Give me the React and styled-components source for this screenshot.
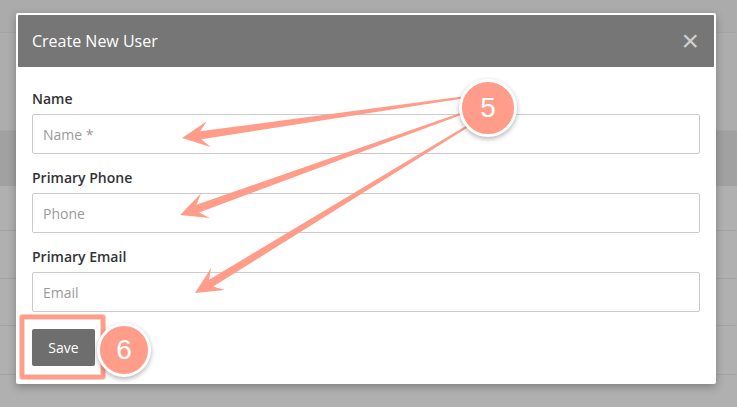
import React from "react";
import styled, { createGlobalStyle } from "styled-components";

const GlobalStyle = createGlobalStyle`
  html, body {
    margin: 0;
    padding: 0;
    width: 737px;
    height: 407px;
    overflow: hidden;
    background: #adadad;
    font-family: "Open Sans", "Noto Sans", sans-serif;
  }
`;

const SALMON = "#ff9d8a";

// ---- backdrop (page behind the dimmed overlay) ----

const Page = styled.div`
  position: relative;
  width: 737px;
  height: 407px;
  overflow: hidden;
  display: flex;
  flex-direction: column;
`;

const TopStrip = styled.div`
  height: 17px;
  background: #b2b2b2;
  display: flex;
  overflow: hidden;
`;

const TopCell = styled.div`
  width: ${(p) => p.width}px;
  height: 17px;
  background: ${(p) => (p.dark ? "#a6a6a6" : "transparent")};
  color: #3f3f3f;
  font-size: 14px;
  line-height: 16px;
  white-space: nowrap;
  overflow: hidden;
  padding-left: ${(p) => p.pad || 0}px;
  box-sizing: border-box;
  span {
    display: block;
    margin-top: -9px;
  }
`;

const Row = styled.div`
  height: ${(p) => p.h}px;
  background: ${(p) => p.bg || "#b0b0b0"};
  border-bottom: 1px solid ${(p) => p.line || "#a2a2a2"};
  box-sizing: border-box;
  flex-shrink: 0;
`;

// ---- modal ----

const Modal = styled.div`
  position: absolute;
  left: 16px;
  top: 13px;
  width: 700px;
  height: 371px;
  background: #fff;
  border-radius: 2px;
  padding: 2px;
  box-sizing: border-box;
  box-shadow: 0 3px 9px rgba(0, 0, 0, 0.28);
  display: flex;
  flex-direction: column;
`;

const Header = styled.div`
  height: 52px;
  background: #767676;
  display: flex;
  align-items: center;
  justify-content: space-between;
  padding: 0 14px;
  border-radius: 1px;
`;

const Title = styled.h4`
  margin: 0;
  font-size: 16px;
  font-weight: 400;
  color: #fff;
`;

const Close = styled.span`
  color: #cfcfcf;
  font-family: "Liberation Sans", Arial, sans-serif;
  font-size: 30px;
  font-weight: 300;
  line-height: 1;
  margin-right: 1px;
`;

const Body = styled.div`
  padding: 22px 14px 0 14px;
  display: flex;
  flex-direction: column;
`;

const Field = styled.div`
  display: flex;
  flex-direction: column;
  gap: 5px;
  margin-bottom: 14px;
  &:last-of-type {
    margin-bottom: 17px;
  }
`;

const Label = styled.label`
  font-size: 14px;
  font-weight: 600;
  line-height: 20px;
  color: #333;
`;

const Input = styled.input`
  height: 40px;
  box-sizing: border-box;
  border: 1px solid #cbcbcb;
  border-radius: 2px;
  padding: 0 10px;
  font-family: "Open Sans", "Noto Sans", sans-serif;
  font-size: 14px;
  color: #555;
  outline: none;
  &::placeholder {
    color: #9a9a9a;
  }
`;

const SaveButton = styled.button`
  align-self: flex-start;
  width: 63px;
  height: 37px;
  border: none;
  border-radius: 2px;
  background: #6e6e6e;
  color: #fff;
  font-family: "Open Sans", "Noto Sans", sans-serif;
  font-size: 14px;
`;

// ---- annotations ----

const Overlay = styled.svg`
  position: absolute;
  left: 0;
  top: 0;
  pointer-events: none;
`;

const Badge = styled.div`
  position: absolute;
  left: ${(p) => p.x - p.r}px;
  top: ${(p) => p.y - p.r}px;
  width: ${(p) => p.r * 2}px;
  height: ${(p) => p.r * 2}px;
  box-sizing: border-box;
  border-radius: 50%;
  border: 3px solid #fff;
  background: ${SALMON};
  box-shadow: 0 2px 5px rgba(0, 0, 0, 0.3);
  color: #fff;
  font-family: "Liberation Sans", Arial, sans-serif;
  font-size: 28px;
  display: flex;
  align-items: center;
  justify-content: center;
`;

const Highlight = styled.div`
  position: absolute;
  left: 20px;
  top: 315px;
  width: 85px;
  height: 64px;
  box-sizing: border-box;
  border: 4px solid ${SALMON};
  border-radius: 2px;
  box-shadow: 0 0 0 1px rgba(255, 190, 178, 0.8), inset 0 0 0 1px rgba(255, 200, 190, 0.8);
`;

const arrowPoints = ([sx, sy], [tx, ty], headLen = 27, hw = 13, w1 = 8, w0 = 2) => {
  const dx = tx - sx;
  const dy = ty - sy;
  const len = Math.hypot(dx, dy);
  const ux = dx / len;
  const uy = dy / len;
  const nx = -uy;
  const ny = ux;
  const base = [tx - ux * headLen, ty - uy * headLen];
  const neck = [tx - ux * headLen * 0.7, ty - uy * headLen * 0.7];
  const pts = [
    [sx + (nx * w0) / 2, sy + (ny * w0) / 2],
    [neck[0] + (nx * w1) / 2, neck[1] + (ny * w1) / 2],
    [base[0] + nx * hw, base[1] + ny * hw],
    [tx, ty],
    [base[0] - nx * hw, base[1] - ny * hw],
    [neck[0] - (nx * w1) / 2, neck[1] - (ny * w1) / 2],
    [sx - (nx * w0) / 2, sy - (ny * w0) / 2],
  ];
  return pts.map((p) => p.map((v) => v.toFixed(1)).join(",")).join(" ");
};

const arrows = [
  { from: [466, 97], to: [182, 138] },
  { from: [466, 112], to: [180, 215] },
  { from: [468, 126], to: [195, 293] },
];

const fields = [
  { label: "Name", placeholder: "Name *" },
  { label: "Primary Phone", placeholder: "Phone" },
  { label: "Primary Email", placeholder: "Email" },
];

const backRows = [
  { h: 33, bg: "#ababab", line: "#a4a4a4" },
  { h: 98, bg: "#adadad", line: "#a6a6a6" },
  { h: 55, bg: "#a1a1a1", line: "#a1a1a1" },
  { h: 45 },
  { h: 48 },
  { h: 47 },
  { h: 49 },
  { h: 40 },
];

const App = () => {
  return (
    <Page>
      <GlobalStyle />
      <TopStrip>
        <TopCell width={220} pad={60}><span>Manage group permissions</span></TopCell>
        <TopCell width={75} dark />
        <TopCell width={442} pad={36}><span>Manage group policy, responsibility</span></TopCell>
      </TopStrip>
      {backRows.map((r, i) => (
        <Row key={i} h={r.h} bg={r.bg} line={r.line} />
      ))}

      <Modal>
        <Header>
          <Title>Create New User</Title>
          <Close>×</Close>
        </Header>
        <Body>
          {fields.map((f) => (
            <Field key={f.label}>
              <Label>{f.label}</Label>
              <Input placeholder={f.placeholder} />
            </Field>
          ))}
          <SaveButton>Save</SaveButton>
        </Body>
      </Modal>

      <Highlight />
      <Overlay width="737" height="407">
        {arrows.map((a, i) => (
          <polygon key={i} points={arrowPoints(a.from, a.to)} fill={SALMON} />
        ))}
      </Overlay>
      <Badge x={488} y={108} r={29}>5</Badge>
      <Badge x={124} y={350} r={27}>6</Badge>
    </Page>
  );
};

export default App;
